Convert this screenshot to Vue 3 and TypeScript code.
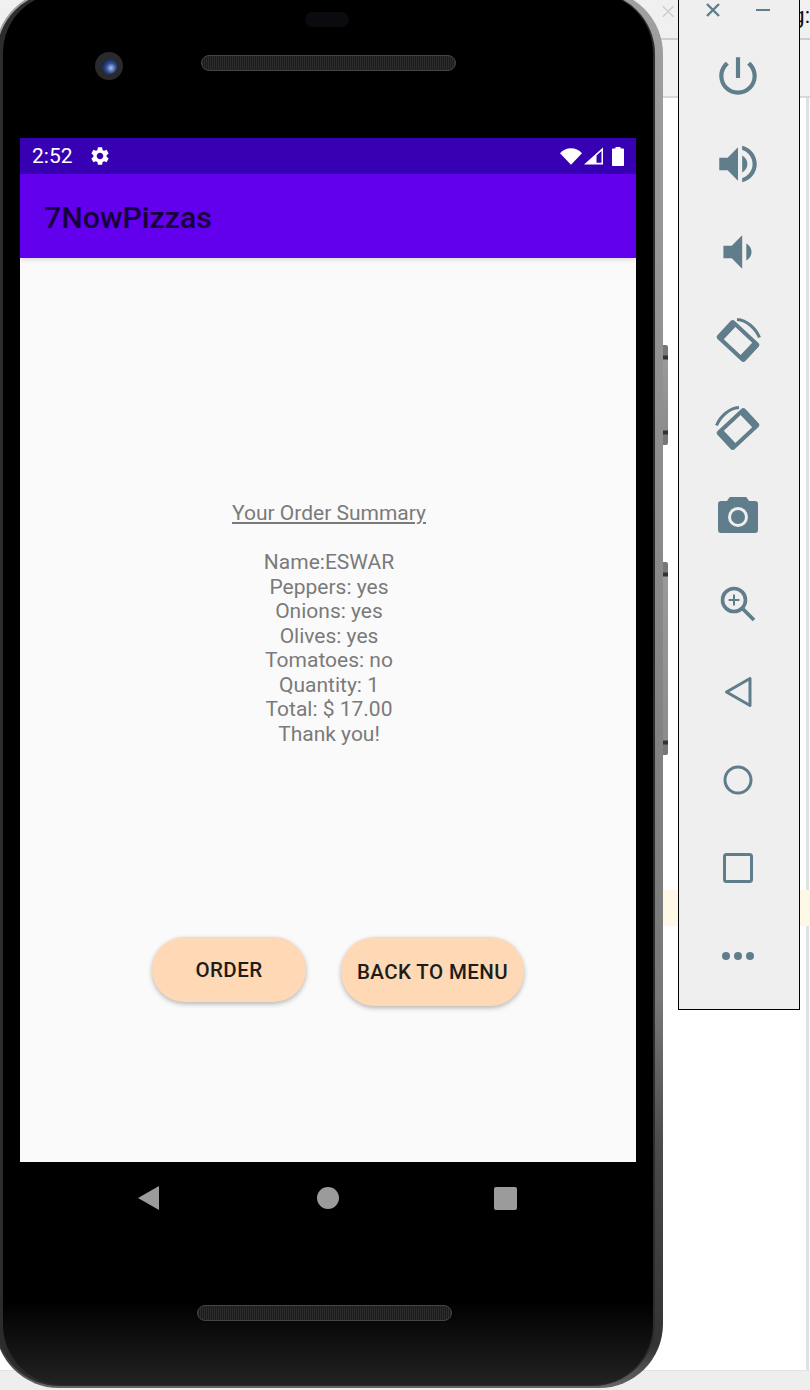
<script setup lang="ts">
const lines: string[] = [
  'Name:ESWAR',
  'Peppers: yes',
  'Onions: yes',
  'Olives: yes',
  'Tomatoes: no',
  'Quantity: 1',
  'Total: $ 17.00',
  'Thank you!',
]
</script>

<template>
  <div class="desktop">
    <div class="backdrop">
      <div class="tabbar">
        <svg class="tab-close" viewBox="0 0 15 15" width="15" height="15">
          <path d="M1 1l13 13M14 1 1 14" stroke="#cdcdcd" stroke-width="1.800" fill="none" />
        </svg>
        <span class="tab-text">g:</span>
      </div>
      <div class="addressbar"></div>
      <div class="pagearea">
        <div class="notice"></div>
      </div>
      <div class="statusstrip"></div>
    </div>

    <div class="phone">
      <span class="side side-a"></span>
      <span class="side side-b"></span>
      <div class="rim">
        <div class="face">
          <div class="top-bezel">
            <div class="sensor"></div>
            <div class="camera-row">
              <div class="camera"><div class="lens"></div></div>
              <div class="speaker"></div>
            </div>
          </div>

          <div class="screen">
            <div class="statusbar">
              <span class="time">2:52</span>
              <svg class="gear" viewBox="0 0 24 24" width="22" height="22">
                <path fill="#fff" d="M19.14 12.94c.04-.3.06-.61.06-.94 0-.32-.02-.64-.07-.94l2.03-1.58c.18-.14.23-.41.12-.61l-1.92-3.32c-.12-.22-.37-.29-.59-.22l-2.39.96c-.5-.38-1.03-.7-1.62-.94l-.36-2.54c-.04-.24-.24-.41-.48-.41h-3.84c-.24 0-.43.17-.47.41l-.36 2.54c-.59.24-1.13.57-1.62.94l-2.39-.96c-.22-.08-.47 0-.59.22L2.74 8.87c-.12.21-.08.47.12.61l2.03 1.58c-.05.3-.09.63-.09.94s.02.64.07.94l-2.03 1.58c-.18.14-.23.41-.12.61l1.92 3.32c.12.22.37.29.59.22l2.39-.96c.5.38 1.03.7 1.62.94l.36 2.54c.05.24.24.41.48.41h3.84c.24 0 .44-.17.47-.41l.36-2.54c.59-.24 1.13-.56 1.62-.94l2.39.96c.22.08.47 0 .59-.22l1.92-3.32c.12-.22.07-.47-.12-.61l-2.01-1.58zM12 15.6c-1.98 0-3.6-1.62-3.6-3.6s1.62-3.6 3.6-3.6 3.6 1.62 3.6 3.6-1.62 3.6-3.6 3.6z" />
              </svg>
              <div class="status-icons">
                <svg viewBox="0 0 22 17" width="22" height="17">
                  <path fill="#fff" d="M0 5.200C3 2 6.800.3 11 .3s8 1.700 11 4.900L11 16.800z" />
                </svg>
                <svg class="signal" viewBox="0 0 19 18" width="19" height="18">
                  <path fill="#fff" fill-rule="evenodd" d="M0 17.500 19 .5v17zM12.500 8.500v7.300h5V4z" />
                </svg>
                <svg class="battery" viewBox="0 0 12 19" width="12" height="19">
                  <path fill="#fff" d="M3.500 1.500V0h5v1.500H11c.6 0 1 .4 1 1V18c0 .6-.4 1-1 1H1c-.6 0-1-.4-1-1V2.500c0-.6.4-1 1-1z" />
                </svg>
              </div>
            </div>
            <div class="appbar">7NowPizzas</div>
            <div class="content">
              <div class="summary">
                <div class="summary-title">Your Order Summary</div>
                <div class="summary-gap"></div>
                <div v-for="line in lines" :key="line">{{ line }}</div>
              </div>
              <div class="actions">
                <button class="btn btn-order" type="button">ORDER</button>
                <button class="btn btn-back" type="button">BACK TO MENU</button>
              </div>
            </div>
          </div>

          <div class="navbar">
            <svg viewBox="0 0 21 24" width="21" height="24"><path fill="#9b9b9b" d="M0 12 21 0v24z" /></svg>
            <svg class="nav-home" viewBox="0 0 22 22" width="22" height="22"><circle cx="11" cy="11" r="11" fill="#9b9b9b" /></svg>
            <svg viewBox="0 0 23 23" width="23" height="23"><rect width="23" height="23" rx="2" fill="#9b9b9b" /></svg>
          </div>

          <div class="speaker speaker-bottom"></div>
        </div>
      </div>
    </div>

    <aside class="toolbar">
      <div class="toolbar-head">
        <svg viewBox="0 0 14 14" width="14" height="14">
          <path d="M1 1l12 12M13 1 1 13" stroke="#607d8b" stroke-width="2.400" fill="none" />
        </svg>
        <span class="minimize"></span>
      </div>

      <div class="tool">
        <svg viewBox="0 0 24 24" width="50" height="50"><path fill="#607d8b" d="M13 3h-2v10h2V3zm4.830 2.170l-1.420 1.420C17.990 7.860 19 9.810 19 12c0 3.870-3.130 7-7 7s-7-3.130-7-7c0-2.190 1.010-4.140 2.580-5.420L6.170 5.170C4.230 6.820 3 9.260 3 12c0 4.970 4.030 9 9 9s9-4.030 9-9c0-2.740-1.230-5.180-3.170-6.830z" /></svg>
      </div>
      <div class="tool">
        <svg viewBox="0 0 24 24" width="50" height="50"><path fill="#607d8b" d="M3 9v6h4l5 5V4L7 9H3zm13.500 3c0-1.770-1.020-3.290-2.500-4.030v8.050c1.480-.73 2.500-2.250 2.500-4.020zM14 3.230v2.060c2.890.86 5 3.540 5 6.710s-2.110 5.850-5 6.710v2.060c4.010-.91 7-4.490 7-8.770s-2.990-7.860-7-8.770z" /></svg>
      </div>
      <div class="tool">
        <svg viewBox="0 0 24 24" width="50" height="50"><path fill="#607d8b" d="M18.500 12c0-1.770-1.020-3.290-2.500-4.030v8.050c1.480-.73 2.500-2.250 2.500-4.020zM5 9v6h4l5 5V4L9 9H5z" /></svg>
      </div>
      <div class="tool">
        <svg viewBox="0 0 48 48" width="48" height="48">
          <g transform="rotate(-47 24 25)">
            <path fill="#607d8b" fill-rule="evenodd" d="M14.500 6h19a3 3 0 0 1 3 3v32a3 3 0 0 1-3 3h-19a3 3 0 0 1-3-3V9a3 3 0 0 1 3-3zM15.500 13.500v23h17v-23z" />
          </g>
          <path fill="none" stroke="#607d8b" stroke-width="3" d="M23 3.500c10 .5 19 9.500 22.500 18" />
        </svg>
      </div>
      <div class="tool">
        <svg class="mirror" viewBox="0 0 48 48" width="48" height="48">
          <g transform="rotate(-47 24 25)">
            <path fill="#607d8b" fill-rule="evenodd" d="M14.500 6h19a3 3 0 0 1 3 3v32a3 3 0 0 1-3 3h-19a3 3 0 0 1-3-3V9a3 3 0 0 1 3-3zM15.500 13.500v23h17v-23z" />
          </g>
          <path fill="none" stroke="#607d8b" stroke-width="3" d="M23 3.500c10 .5 19 9.500 22.500 18" />
        </svg>
      </div>
      <div class="tool">
        <svg viewBox="0 0 40 38" width="40" height="38">
          <path fill="#607d8b" d="M9 4l2-3c.4-.6 1-1 2-1h14c1 0 1.600.4 2 1l2 3h6c2 0 3 1 3 3v26c0 2-1 3-3 3H3c-2 0-3-1-3-3V7c0-2 1-3 3-3z" />
          <circle cx="20" cy="20" r="8.500" fill="#607d8b" stroke="#efefef" stroke-width="3" />
        </svg>
      </div>
      <div class="tool">
        <svg viewBox="0 0 36 36" width="36" height="36">
          <circle cx="14" cy="14" r="11.500" fill="none" stroke="#607d8b" stroke-width="3.600" />
          <path d="M22.500 22.500 34 34" stroke="#607d8b" stroke-width="3.800" fill="none" />
          <path d="M14 8.500v11M8.500 14h11" stroke="#607d8b" stroke-width="2" fill="none" />
        </svg>
      </div>
      <div class="tool">
        <svg viewBox="0 0 28 32" width="28" height="32">
          <path d="M2.500 16 26 2.500v27z" fill="none" stroke="#607d8b" stroke-width="3" stroke-linejoin="round" />
        </svg>
      </div>
      <div class="tool">
        <svg viewBox="0 0 30 30" width="30" height="30"><circle cx="15" cy="15" r="13" fill="none" stroke="#607d8b" stroke-width="3" /></svg>
      </div>
      <div class="tool">
        <svg viewBox="0 0 30 30" width="30" height="30"><rect x="1.500" y="1.500" width="27" height="27" rx="2" fill="none" stroke="#607d8b" stroke-width="3" /></svg>
      </div>
      <div class="tool">
        <svg viewBox="0 0 32 8" width="32" height="8">
          <circle cx="4" cy="4" r="4" fill="#607d8b" /><circle cx="16" cy="4" r="4" fill="#607d8b" /><circle cx="28" cy="4" r="4" fill="#607d8b" />
        </svg>
      </div>
    </aside>
  </div>
</template>

<style>
html, body { margin: 0; background: #fff; }
</style>

<style scoped>
.desktop {
  position: relative;
  width: 810px;
  height: 1390px;
  overflow: hidden;
  font-family: Roboto, "Liberation Sans", sans-serif;
}

/* browser window visible behind the emulator */
.backdrop {
  position: absolute;
  inset: 0;
  display: flex;
  flex-direction: column;
  background: #fff;
}
.tabbar {
  height: 40px;
  box-sizing: border-box;
  background: #f0f0f0;
  border-bottom: 2px solid #cfcfcf;
  display: flex;
  align-items: flex-start;
  padding: 4px 0 0 662px;
  flex: none;
}
.tab-text {
  margin-left: 118px;
  font-size: 22px;
  line-height: 24px;
  color: #111;
}
.addressbar {
  height: 58px;
  box-sizing: border-box;
  flex: none;
  background: #f2f2f2;
  border-bottom: 2px solid #d8d8d8;
}
.pagearea {
  flex: 1;
  box-sizing: border-box;
  padding-top: 792px;
  border-right: 3px solid #e0e0e0;
  margin-right: 1px;
}
.notice {
  height: 36px;
  margin-right: -4px;
  background: #fff8e7;
}
.statusstrip {
  height: 20px;
  flex: none;
  box-sizing: border-box;
  background: #eeeeee;
  border-top: 1px solid #e4e4e4;
}

/* device frame */
.phone {
  position: absolute;
  left: -5px;
  top: -10px;
  width: 668px;
  height: 1398px;
  box-sizing: border-box;
  padding: 2px 8px 2px 2px;
  border-radius: 64px;
  background: linear-gradient(180deg, #a0a0a0 0, #787878 72%, #4a4a4a 83%, #333 97%, #666 100%);
}
.side {
  position: absolute;
  right: -5px;
  width: 5px;
  border-radius: 0 2px 2px 0;
  background: linear-gradient(180deg, #777 0, #777 10px, #333 11px, #333 14px, #9a9a9a 15px, #8c8c8c calc(100% - 15px), #333 calc(100% - 14px), #333 calc(100% - 11px), #777 calc(100% - 10px));
}
.side-a { top: 355px; height: 100px; }
.side-b { top: 572px; height: 193px; }
.rim {
  height: 100%;
  box-sizing: border-box;
  padding: 1px 2px 1px 6px;
  border-radius: 62px;
  background: #2c2c2c;
}
.face {
  height: 100%;
  box-sizing: border-box;
  border-radius: 60px;
  background: linear-gradient(180deg, #000 0, #000 94%, #222 100%);
  display: flex;
  flex-direction: column;
  padding-left: 17px;
}
.top-bezel {
  height: 145px;
  flex: none;
  box-sizing: border-box;
  padding-top: 19px;
}
.sensor {
  width: 44px;
  height: 15px;
  margin-left: 285px;
  border-radius: 8px;
  background: #0b0b0f;
}
.camera-row {
  display: flex;
  align-items: flex-start;
  margin-top: 25px;
  margin-left: 75px;
}
.camera {
  width: 28px;
  height: 28px;
  border-radius: 50%;
  background: #2a2a2c;
  display: flex;
  align-items: center;
  justify-content: center;
}
.lens {
  width: 15px;
  height: 15px;
  border-radius: 50%;
  background: radial-gradient(circle at 60% 60%, #a9c4f0 0, #2e4a94 40%, #0c1430 90%);
}
.speaker {
  width: 255px;
  height: 16px;
  margin-left: 78px;
  margin-top: 3px;
  box-sizing: border-box;
  border: 1.500px solid #444;
  border-radius: 8px;
  background: repeating-linear-gradient(90deg, #2c2c2b 0, #2c2c2b 1px, #1c1c1c 1px, #1c1c1c 2px);
}
.speaker-bottom {
  margin-left: 177px;
  margin-top: 71px;
  flex: none;
}
.screen {
  width: 616px;
  height: 1024px;
  flex: none;
  display: flex;
  flex-direction: column;
  background: #fafafa;
}
.statusbar {
  height: 36px;
  flex: none;
  background: #3700b3;
  display: flex;
  align-items: center;
  padding: 0 12px 0 12px;
  color: #fff;
}
.time {
  font-size: 21px;
  line-height: 36px;
}
.gear { margin-left: 16px; }
.status-icons {
  margin-left: auto;
  display: flex;
  align-items: center;
}
.signal { margin-left: 2px; }
.battery { margin-left: 9px; }
.appbar {
  height: 84px;
  flex: none;
  box-sizing: border-box;
  padding-left: 24px;
  background: #6200ee;
  color: #16003a;
  font-size: 30.300px;
  font-weight: 500;
  line-height: 88px;
  box-shadow: 0 2px 4px rgba(0, 0, 0, 0.12);
  position: relative;
}
.content {
  flex: 1;
  box-sizing: border-box;
  padding-top: 243px;
}
.summary {
  width: 618px;
  text-align: center;
  color: #7a7a7a;
  font-size: 21px;
  line-height: 24.500px;
}
.summary-title { text-decoration: underline; }
.summary-gap { height: 24.500px; }
.actions {
  display: flex;
  align-items: flex-start;
  gap: 35px;
  margin-top: 191px;
  padding-left: 132px;
}
.btn {
  border: none;
  padding: 0;
  font-family: inherit;
  font-size: 20.500px;
  font-weight: 500;
  letter-spacing: 0.400px;
  color: #201c18;
  background: #ffd8b5;
  border-radius: 34px;
  box-shadow: 0 2px 5px rgba(0, 0, 0, 0.28);
}
.btn-order { width: 154px; height: 65px; }
.btn-back { width: 183px; height: 69px; }
.navbar {
  height: 72px;
  flex: none;
  box-sizing: border-box;
  padding-left: 118px;
  display: flex;
  align-items: center;
}
.nav-home { margin: 0 155px 0 158px; }

/* emulator side toolbar */
.toolbar {
  position: absolute;
  left: 678px;
  top: -1px;
  width: 122px;
  height: 1011px;
  box-sizing: border-box;
  padding-right: 2px;
  background: #efefef;
  border: 1.500px solid #000;
  display: flex;
  flex-direction: column;
  align-items: center;
}
.toolbar-head {
  height: 32px;
  flex: none;
  align-self: stretch;
  box-sizing: border-box;
  padding: 3px 27px 0 27px;
  display: flex;
  align-items: flex-start;
  justify-content: space-between;
}
.minimize {
  width: 14px;
  height: 2px;
  margin-top: 6px;
  background: #607d8b;
}
.tool {
  height: 88px;
  flex: none;
  display: flex;
  align-items: center;
  justify-content: center;
}
.mirror { transform: scaleX(-1); }
</style>
